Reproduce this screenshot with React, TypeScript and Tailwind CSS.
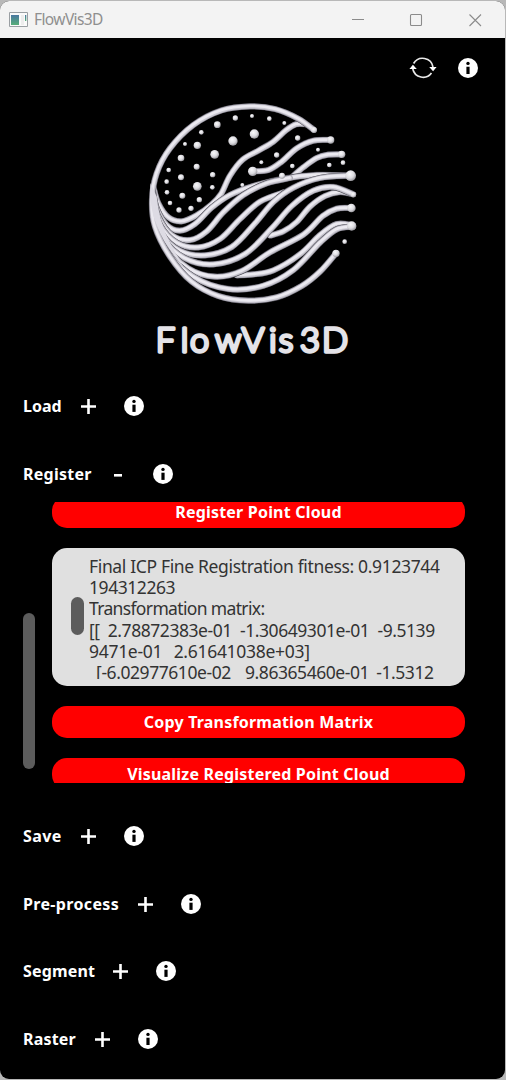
import React from "react";

type Pt = [number, number];

function smooth(pts: Pt[]): string {
  let d = `M${pts[0][0]},${pts[0][1]}`;
  for (let i = 0; i < pts.length - 1; i++) {
    const p0 = pts[i - 1] ?? pts[i];
    const p1 = pts[i];
    const p2 = pts[i + 1];
    const p3 = pts[i + 2] ?? p2;
    d += ` C${p1[0] + (p2[0] - p0[0]) / 6},${p1[1] + (p2[1] - p0[1]) / 6} ${p2[0] - (p3[0] - p1[0]) / 6},${p2[1] - (p3[1] - p1[1]) / 6} ${p2[0]},${p2[1]}`;
  }
  return d;
}

const strands: Pt[][] = [
  [[390, 437], [430, 424], [470, 396], [510, 350], [555, 318], [600, 306], [640, 313]],
  [[290, 556], [340, 553], [400, 541], [480, 493], [540, 435], [590, 402], [640, 406]],
  [[338, 244], [385, 240], [425, 215], [470, 175], [520, 152], [572, 150]],
  [[455, 262], [490, 232], [530, 204], [565, 194], [605, 193]],
  [[40, 290], [55, 340], [85, 382], [125, 394], [170, 376], [215, 343], [243, 312], [270, 257], [308, 209], [355, 182], [400, 155], [438, 121], [468, 103], [500, 103]],
  [[38, 300], [50, 355], [80, 405], [120, 422], [165, 402], [215, 353], [270, 315], [340, 288], [430, 266], [530, 255], [632, 257]],
  [[38, 320], [55, 380], [95, 435], [150, 450], [200, 424], [250, 367], [310, 315], [380, 280], [450, 264]],
  [[38, 330], [60, 405], [110, 458], [175, 472], [240, 447], [300, 387], [360, 335], [435, 306]],
  [[38, 340], [65, 430], [120, 482], [195, 496], [275, 471], [345, 400], [400, 336], [460, 293], [540, 264], [632, 257]],
  [[38, 350], [70, 445], [135, 505], [220, 523], [315, 492], [395, 415], [455, 348], [520, 302], [580, 291], [640, 313]],
  [[38, 360], [75, 465], [145, 535], [225, 560], [305, 543], [390, 487], [490, 434], [548, 378], [590, 356], [632, 354]],
  [[38, 365], [80, 480], [160, 560], [265, 597], [370, 587], [460, 540], [540, 458], [590, 418], [640, 410]],
  [[522, 120], [475, 86], [405, 57], [330, 49], [245, 61], [160, 105], [90, 175], [50, 250], [36, 330], [45, 410], [90, 500], [155, 575], [235, 618], [325, 632], [410, 622], [485, 588], [540, 545], [588, 490]],
];

const dots: [number, number, number][] = [
  [336, 78, 6], [286, 84, 8], [232, 104, 10], [388, 86, 7], [433, 99, 6], [184, 127, 7], [343, 132, 14],
  [279, 153, 14], [135, 162, 6], [172, 166, 11], [224, 193, 13], [123, 204, 10], [170, 230, 9], [86, 240, 7],
  [218, 254, 8], [123, 262, 9], [80, 275, 7], [172, 289, 13], [217, 292, 7], [81, 307, 7], [127, 317, 9],
  [178, 329, 8], [90, 339, 7], [117, 360, 8], [153, 355, 8], [473, 144, 8], [534, 179, 6], [410, 195, 8],
  [364, 217, 6], [457, 228, 7], [568, 225, 7], [609, 218, 7], [426, 257, 9], [307, 285, 6], [614, 455, 7],
  [522, 120, 9], [572, 150, 11], [605, 193, 11], [338, 244, 14], [632, 257, 16], [640, 314, 8], [634, 354, 13],
  [635, 408, 14], [588, 490, 11],
];

const letters: [string, number][] = [
  ["F", 47], ["l", 122], ["o", 150], ["w", 225], ["V", 305], ["i", 387], ["s", 416], ["3", 480], ["D", 546],
];

function Logo() {
  return (
    <svg viewBox="0 0 690 810" className="h-[270px] w-[230px]" fill="none" strokeLinecap="round" strokeLinejoin="round">
      <defs>
        <radialGradient id="bead" cx="40%" cy="35%" r="65%">
          <stop offset="0" stopColor="#fafafc" />
          <stop offset="0.6" stopColor="#dcdbe0" />
          <stop offset="1" stopColor="#9a999f" />
        </radialGradient>
      </defs>
      <path d="M34,270 C20,360 60,470 150,560 C110,490 65,420 52,350 Z" fill="#dcdae3" />
      {strands.map((s, i) => {
        const d = smooth(s);
        return (
          <g key={i}>
            <path d={d} stroke="#3d3c44" strokeWidth="19" strokeLinecap="butt" />
            <path d={d} stroke="#a09ea9" strokeWidth="17" />
            <path d={d} stroke="#cbc9d2" strokeWidth="13" />
            <path d={d} stroke="#ebe9f0" strokeWidth="8" transform="translate(-1 -1)" />
          </g>
        );
      })}
      <path d="M32,280 C22,370 62,455 130,530 C90,455 62,420 50,320 Z" fill="#dddbe4" />
      {dots.map(([x, y, r], i) => (
        <circle key={i} cx={x} cy={y} r={r} fill="url(#bead)" />
      ))}
      <g fill="#e4e3e8" stroke="#e4e3e8" strokeWidth="10" fontFamily="Lato, sans-serif" fontSize="103" fontWeight="300">
        {letters.map(([c, x]) => (
          <text key={x} x={x} y="785">{c}</text>
        ))}
      </g>
    </svg>
  );
}

function InfoIcon() {
  return (
    <svg viewBox="0 0 20 20" className="h-5 w-5 shrink-0">
      <circle cx="10" cy="10" r="10" fill="#fff" />
      <circle cx="10" cy="5.4" r="1.7" fill="#000" />
      <path d="M8.4 8.7h3.2v7.2H8.4z" fill="#000" />
    </svg>
  );
}

function Section({ label, width, open, height }: { label: string; width: string; open?: boolean; height: string }) {
  return (
    <div className={`flex shrink-0 items-center pl-[23px] text-white ${height}`}>
      <span className={`whitespace-nowrap text-[16px] font-bold ${width}`}>{label}</span>
      <span className="flex w-[62px] items-center pl-[19px]">
        {open ? (
          <svg viewBox="0 0 15 15" className="ml-[3px] h-[15px] w-[15px]"><path d="M1 7h8v2.6H1z" fill="#fff" /></svg>
        ) : (
          <svg viewBox="0 0 15 15" className="mt-px h-[15px] w-[15px]"><path d="M6.2 0h2.6v6.2H15v2.600H8.800V15H6.200V8.800H0V6.200h6.200z" fill="#fff" /></svg>
        )}
      </span>
      <InfoIcon />
    </div>
  );
}

function RedButton({ children }: { children: React.ReactNode }) {
  return (
    <button className="flex h-8 w-full shrink-0 items-center justify-center rounded-[15px] bg-[#ff0000] text-[16px] font-bold tracking-[0.2px] text-white">
      {children}
    </button>
  );
}

export default function App() {
  return (
    <div className="h-[1080px] w-[506px] overflow-hidden bg-[#b8b8b8] pr-px pt-px pb-px font-['Noto_Sans',sans-serif]">
      <div className="flex h-[1078px] w-[505px] flex-col overflow-hidden rounded-[9px] bg-black">
        <header className="flex h-[37px] shrink-0 items-center bg-[#f3f3f3]">
          <svg viewBox="0 0 19 15" className="ml-[9px] h-[15px] w-[19px]">
            <defs>
              <linearGradient id="app" x1="0" y1="0" x2="0" y2="1">
                <stop offset="0" stopColor="#4977a0" />
                <stop offset="1" stopColor="#57ae79" />
              </linearGradient>
            </defs>
            <path d="M.5.5h18v14H.5z" fill="#fafafa" stroke="#9a9fa3" />
            <path d="M2 3h8v10H2z" fill="url(#app)" />
            <path d="M12 3h3v10h-3z" fill="#ededed" />
            <path d="M16 3h1.3v6H16z" fill="url(#app)" />
          </svg>
          <span className="ml-[6px] text-[15.5px] tracking-[-0.6px] text-[#8f8f8f]">FlowVis3D</span>
          <svg viewBox="0 0 130 14" className="ml-auto mr-[23px] h-[14px] w-[130px]" fill="none" stroke="#8b8b8b" strokeWidth="1.1">
            <path d="M0 6.5h12" />
            <rect x="58.5" y="1.5" width="11" height="11" rx="1" />
            <path d="M117.5 1.5l11.5 11.5M129 1.5l-11.5 11.5" />
          </svg>
        </header>

        <div className="flex h-[52px] shrink-0 items-center justify-end gap-[21px] pr-[27px] pt-2">
          <svg viewBox="0 0 28 24" className="h-6 w-7" fill="none" stroke="#e8e8e8" strokeWidth="1.7">
            <path d="M4.600 7.500A10.500 10.500 0 0 1 24 11" />
            <path d="M22.500 17A10.500 10.500 0 0 1 3.800 13" />
            <path d="M20.200 11h7.400l-3.500 4.200z M.4 13h7.400L3.900 8.800z" fill="#fff" stroke="none" />
          </svg>
          <InfoIcon />
        </div>

        <div className="ml-[140px] h-[282px] shrink-0"><Logo /></div>

        <Section label="Load" width="w-[39px]" height="h-[68px]" />
        <Section label="Register" width="w-[68px] tracking-[0.25px]" height="h-[62px] pt-[6px]" open />

        <div className="flex h-[281px] shrink-0 overflow-hidden pl-[23px]">
          <div className="mt-[111px] h-[156px] w-3 shrink-0 rounded-full bg-[#5c5c5c]" />
          <div className="-mt-[6px] ml-[17px] flex w-[413px] flex-col gap-5">
            <RedButton>Register Point Cloud</RedButton>
            <div className="flex h-[138px] shrink-0 overflow-hidden rounded-[15px] bg-[#e0e0e0] pl-[19px]">
              <div className="mt-[49px] h-[38px] w-[13px] shrink-0 rounded-full bg-[#5c5c5c]" />
              <div className="ml-[5px] mt-2 h-[123px] overflow-hidden whitespace-pre text-[17.5px] leading-[21.2px] tracking-[-0.44px] text-[#333]">
                <div className="tracking-[-0.35px]">Final ICP Fine Registration fitness: 0.9123744</div>
                <div>194312263</div>
                <div className="tracking-[-0.65px]">Transformation matrix:</div>
                <div className="[word-spacing:4px]">[[ 2.78872383e-01 -1.30649301e-01 -9.5139</div>
                <div className="tracking-[-0.3px] [word-spacing:1.5px]">9471e-01  2.61641038e+03]</div>
                <div className="[word-spacing:3px]"> [-6.02977610e-02  9.86365460e-01 -1.5312</div>
              </div>
            </div>
            <RedButton>Copy Transformation Matrix</RedButton>
            <RedButton>Visualize Registered Point Cloud</RedButton>
          </div>
        </div>

        <div className="h-[19px] shrink-0" />
        <Section label="Save" width="w-[39px] tracking-[0.4px]" height="h-[68px]" />
        <Section label="Pre-process" width="w-[96px] tracking-[0.35px]" height="h-[67px]" />
        <Section label="Segment" width="w-[71px] tracking-[0.15px]" height="h-[68px]" />
        <Section label="Raster" width="w-[53px] tracking-[0.2px]" height="h-[67px]" />
      </div>
    </div>
  );
}
